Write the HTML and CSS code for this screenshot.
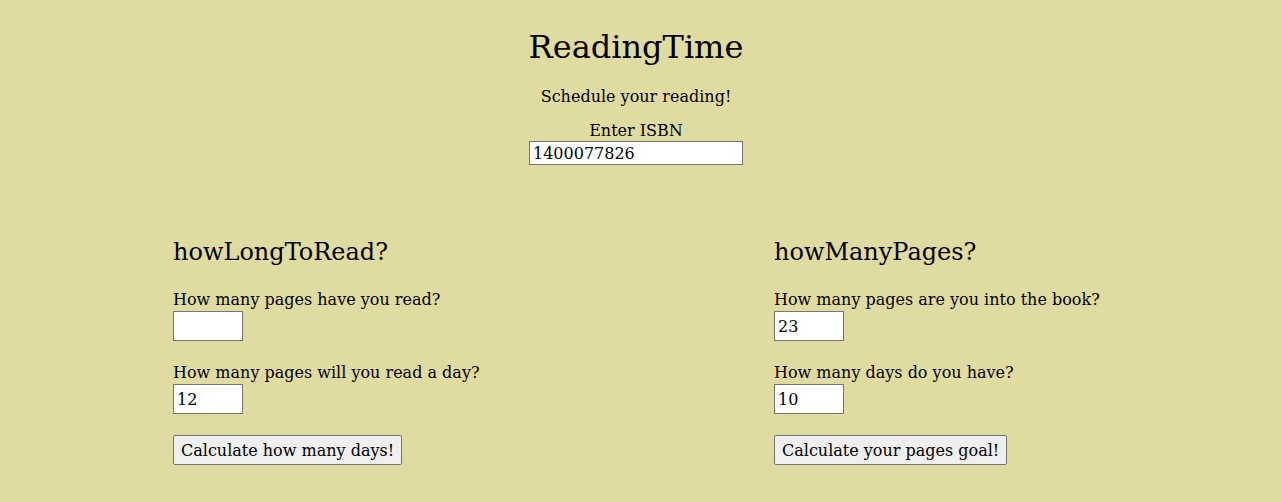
FILE: index.html
```html
<!DOCTYPE html>
<html lang="en">
<head>
<meta charset="utf-8">
<title>ReadingTime</title>
<link rel="stylesheet" href="styles.css">
</head>
<body>
<header class="header">
  <h1 class="title">ReadingTime</h1>
  <p class="subtitle">Schedule your reading!</p>
  <label class="isbn-label" for="isbn">Enter ISBN</label>
  <input class="isbn-input" id="isbn" type="text" value="1400077826">
</header>
<main class="columns">
  <section class="calc">
    <h2 class="calc-title">howLongToRead?</h2>
    <div class="field">
      <label class="field-label" for="read">How many pages have you read?</label>
      <input class="num-input" id="read" type="text" value="">
    </div>
    <div class="field">
      <label class="field-label" for="perday">How many pages will you read a day?</label>
      <input class="num-input" id="perday" type="text" value="12">
    </div>
    <button class="calc-btn" type="button">Calculate how many days!</button>
  </section>
  <section class="calc">
    <h2 class="calc-title">howManyPages?</h2>
    <div class="field">
      <label class="field-label" for="into">How many pages are you into the book?</label>
      <input class="num-input" id="into" type="text" value="23">
    </div>
    <div class="field">
      <label class="field-label" for="days">How many days do you have?</label>
      <input class="num-input" id="days" type="text" value="10">
    </div>
    <button class="calc-btn" type="button">Calculate your pages goal!</button>
  </section>
</main>
</body>
</html>
```

FILE: styles.css
```css
html, body {
  margin: 0;
  padding: 0;
}
body {
  background: #e0dca1;
  color: #000;
  font-family: "DejaVu Serif", "Liberation Serif", serif;
  font-size: 16px;
  padding: 8px;
}
.header {
  display: flex;
  flex-direction: column;
  align-items: center;
  padding-right: 9px;
}
.title {
  font-size: 32px;
  font-weight: normal;
  margin: 19px 0 0;
  line-height: 40px;
}
.subtitle {
  margin: 19px 0 0;
  line-height: 22px;
}
.isbn-label {
  margin-top: 13px;
  line-height: 20px;
}
.isbn-input {
  width: 214px;
  height: 24px;
  box-sizing: border-box;
  font: inherit;
  padding: 0 3px;
  border: 1px solid #767676;
  background: #fff;
}
.columns {
  display: grid;
  grid-template-columns: 601px auto;
  padding-left: 165px;
  margin-top: 72px;
}
.calc {
  display: flex;
  flex-direction: column;
  align-items: flex-start;
}
.calc-title {
  font-size: 24px;
  font-weight: normal;
  margin: 0;
  line-height: 30px;
}
.field {
  display: flex;
  flex-direction: column;
  align-items: flex-start;
  margin-top: 22px;
}
.field + .field {
  margin-top: 21px;
}
.field-label {
  line-height: 22px;
}
.num-input {
  width: 70px;
  height: 30px;
  box-sizing: border-box;
  font: inherit;
  padding: 0 3px;
  border: 1px solid #767676;
  background: #fff;
}
.calc-btn {
  margin-top: 21px;
  font: inherit;
  height: 30px;
  padding: 0 7px;
  border: 1px solid #767676;
  border-radius: 2px;
  background: #efefef;
  color: #000;
}
```
